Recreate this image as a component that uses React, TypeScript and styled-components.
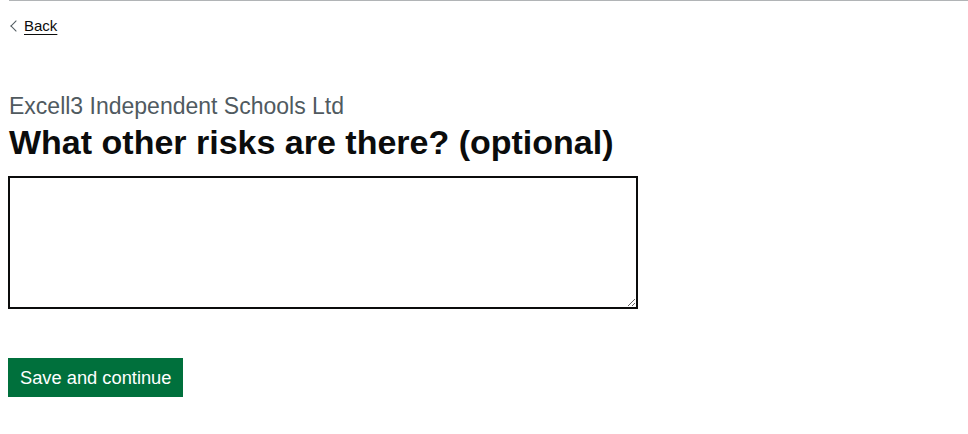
import styled, { createGlobalStyle } from "styled-components";

const GlobalStyle = createGlobalStyle`
  html, body {
    margin: 0;
    padding: 0;
    background: #ffffff;
  }
  body {
    font-family: "Liberation Sans", Arial, sans-serif;
    color: #0b0c0c;
  }
`;

const Page = styled.div`
  padding: 0 0 0 8px;
`;

const TopRule = styled.div`
  height: 1px;
  margin-left: 1px;
  background: #b1b4b6;
`;

const BackLink = styled.a`
  display: inline-flex;
  align-items: center;
  gap: 4px;
  margin: 16px 0 0 1px;
  font-size: 15px;
  color: #0b0c0c;
  text-decoration: underline;
  text-underline-offset: 3px;
  cursor: pointer;
`;

const Chevron = styled.span`
  width: 7px;
  height: 7px;
  border-left: 1px solid #505a5f;
  border-bottom: 1px solid #505a5f;
  transform: rotate(45deg);
  margin-left: 3px;
`;

const Main = styled.main`
  padding-top: 58px;
`;

const Caption = styled.span`
  display: block;
  font-size: 23px;
  line-height: 28px;
  color: #505a5f;
  padding-left: 1px;
`;

const Heading = styled.h1`
  margin: 0 0 12px;
  font-size: 34px;
  line-height: 44px;
  font-weight: 700;
  padding-left: 1px;
`;

const TextArea = styled.textarea`
  display: block;
  box-sizing: border-box;
  width: 630px;
  height: 133px;
  margin: 0;
  padding: 5px;
  border: 2px solid #0b0c0c;
  border-radius: 0;
  font-family: inherit;
  font-size: 19px;
  resize: vertical;
`;

const Button = styled.button`
  display: inline-block;
  margin-top: 49px;
  padding: 8px 12px 7px;
  border: 0;
  border-radius: 0;
  background: #00703c;
  box-shadow: 0 2px 0 #002d18;
  color: #ffffff;
  font-family: inherit;
  font-size: 18.3px;
  line-height: 24px;
  cursor: pointer;
`;

export default function App() {
  return (
    <>
      <GlobalStyle />
      <Page>
        <TopRule />
        <BackLink>
          <Chevron />
          Back
        </BackLink>
        <Main>
          <Caption>Excell3 Independent Schools Ltd</Caption>
          <Heading>What other risks are there? (optional)</Heading>
          <TextArea aria-label="What other risks are there? (optional)" />
          <Button>Save and continue</Button>
        </Main>
      </Page>
    </>
  );
}
